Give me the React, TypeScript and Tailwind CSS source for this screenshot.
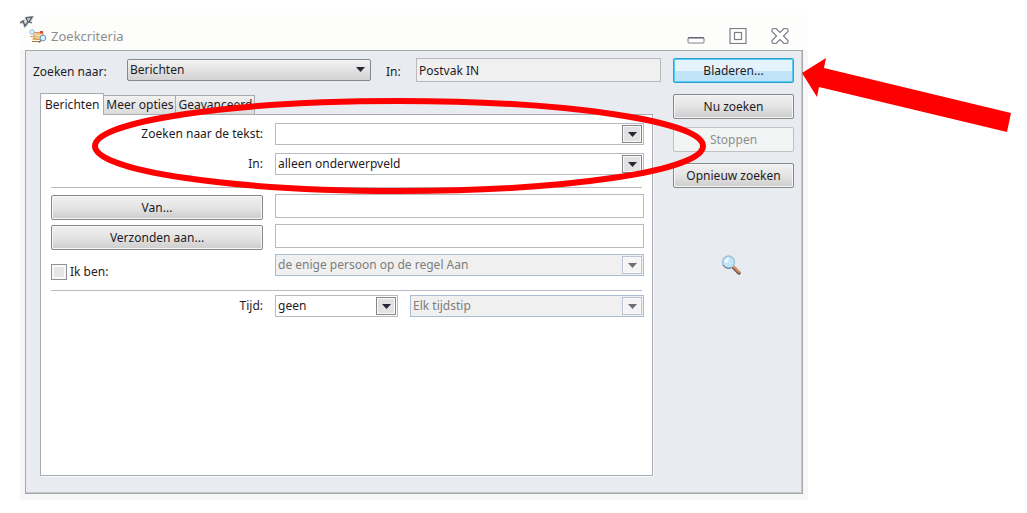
import React, { useState } from "react";
import type { ReactNode } from "react";

interface ButtonProps {
  children: ReactNode;
  disabled?: boolean;
  primary?: boolean;
}

interface DropdownProps {
  id: string;
  label?: string;
  options: string[];
  disabled?: boolean;
}

const DialogButton = ({ children, disabled, primary }: ButtonProps) => {
  const look = disabled
    ? "border-[#bfc1c4] bg-[#f3f4f4] text-[#8f8f8f]"
    : primary
      ? "border-[#2f9fd0] bg-linear-to-b from-[#e4f3fc] from-50% to-[#bfe4f8] to-50% shadow-[inset_0_0_0_1px_#55cdf5]"
      : "border-[#85878b] bg-linear-to-b from-[#f1f1f1] via-[#e4e4e4] via-50% to-[#cdcdcd] shadow-[inset_0_0_0_1px_#f6f6f6]";
  return (
    <button
      disabled={disabled}
      className={`block h-[25px] w-full rounded-xs border text-center ${look}`}
    >
      {children}
    </button>
  );
};

const Triangle = () => (
  <svg width="9" height="5" viewBox="0 0 9 5" fill="currentColor">
    <path d="M0 0h9L4.500 5z" />
  </svg>
);

const arrowBox =
  "flex w-5 items-center justify-center border shadow-[inset_0_0_0_1px_#fafafa]";

const Dropdown = ({ id, label, options, disabled }: DropdownProps) => (
  <div
    className={`relative h-[22px] w-full border ${
      disabled ? "border-[#a9bdd3] bg-[#f0f0f0]" : "border-[#b9babd] bg-white"
    }`}
  >
    <select
      id={id}
      aria-label={label}
      disabled={disabled}
      className={`block h-5 w-full appearance-none pr-6 pl-0.5 leading-5 opacity-100 ${
        disabled ? "text-[#7d7d7d]" : "text-[#1f1b24]"
      }`}
    >
      {options.map((option) => (
        <option key={option}>{option}</option>
      ))}
    </select>
    <span
      className={`pointer-events-none absolute inset-y-px right-px ${arrowBox} ${
        disabled
          ? "border-[#b9c4d0] bg-[#f4f4f4] text-[#6e6e78]"
          : "border-[#85878b] bg-[#e2e2e2] text-[#2a2433]"
      }`}
    >
      <Triangle />
    </span>
  </div>
);

const TitleIcon = () => (
  <svg width="18" height="15" viewBox="0 0 18 15">
    <path d="M5 3.500h9v7H5z" fill="#ecc48a" stroke="#d09a5c" />
    <path d="M3 12.500h8" stroke="#a8743c" />
    <path d="M5 4.500l4 2.500 4-2" fill="none" stroke="#fae9c8" />
    <path d="M1 7.500h4M3 10h3" stroke="#d9a565" />
    <rect x="11" y="2" width="3" height="2.500" fill="#e2463a" />
    <circle cx="3" cy="3" r="2.200" fill="#e6f4fc" stroke="#8fb6d8" />
    <circle cx="14" cy="9" r="2.800" fill="#dff2fc" stroke="#5b9ad0" />
    <path d="M12 11.500l-2 2" stroke="#8a5a34" strokeWidth="1.500" />
  </svg>
);

const Magnifier = () => (
  <svg width="20" height="20" viewBox="0 0 20 20">
    <path d="M12 12l6 6" stroke="#6d5a54" strokeWidth="3.500" strokeLinecap="round" />
    <path d="M12.500 11.500l5.500 5.500" stroke="#e0905f" strokeWidth="2" strokeLinecap="round" />
    <circle cx="7.500" cy="7" r="6" fill="#bfe6f9" stroke="#a3c3d8" strokeWidth="1.500" />
    <path d="M3.500 7a4 4 0 0 1 5-4L6 8z" fill="#f1fbff" />
    <path d="M2 10a6.500 6.500 0 0 0 8 3" fill="none" stroke="#5f7283" />
  </svg>
);

const WindowControls = () => (
  <div className="flex items-center gap-6 text-[#7c7e88]">
    <button aria-label="Minimaliseren" className="pt-2">
      <svg width="18" height="7" viewBox="0 0 18 7">
        <rect x="1" y="0.500" width="16" height="5.500" rx="1" fill="#fff" stroke="currentColor" />
        <path d="M1 1h16" stroke="#4f5160" />
      </svg>
    </button>
    <button aria-label="Maximaliseren">
      <svg width="18" height="16" viewBox="0 0 18 16" fill="#fff" stroke="currentColor">
        <rect x="1" y="0.500" width="16" height="15" strokeWidth="1.200" />
        <rect x="5.500" y="4.500" width="7" height="7" strokeWidth="1.200" />
      </svg>
    </button>
    <button aria-label="Sluiten">
      <svg width="18" height="16" viewBox="0 0 18 16">
        <path
          d="M1 2.500Q1 .5 3 .5h2L9 4.500 13 .5h2q2 0 2 2v1L12.500 8 17 12.500v1q0 2-2 2h-2L9 11.500l-4 4H3q-2 0-2-2v-1L5.500 8 1 3.500z"
          fill="#fff"
          stroke="currentColor"
          strokeWidth="1.200"
        />
      </svg>
    </button>
  </div>
);

const tabs = ["Berichten", "Meer opties", "Geavanceerd"];

const formRow = "grid grid-cols-[212px_1fr] gap-x-3";
const textBox = "block h-6 w-full border border-[#b9babd] bg-white px-1";

const SearchForm = () => {
  const [text, setText] = useState("");
  return (
    <div className="min-h-[362px] border border-[#a9abb0] bg-white pt-2 pr-2 pl-2.5 shadow-[1px_1px_0_#fafafa]">
      <div className={`${formRow} items-center`}>
        <label htmlFor="text" className="text-right">
          Zoeken naar de tekst:
        </label>
        <div className="flex h-[22px] border border-[#b9babd] p-px">
          <input
            id="text"
            value={text}
            onChange={(e) => setText(e.target.value)}
            className="min-w-0 flex-1 px-1"
          />
          <button
            aria-label="Recente teksten"
            className={`${arrowBox} border-[#85878b] bg-[#e2e2e2] text-[#2a2433]`}
          >
            <Triangle />
          </button>
        </div>
      </div>
      <div className={`${formRow} mt-2 items-center`}>
        <label htmlFor="field" className="text-right">
          In:
        </label>
        <Dropdown id="field" options={["alleen onderwerpveld"]} />
      </div>

      <hr className="mt-3 mr-0.5 mb-1.5 border-[#b9babd]" />

      <div className={formRow}>
        <div className="pt-px">
          <DialogButton>Van...</DialogButton>
        </div>
        <input aria-label="Van" className={textBox} />
      </div>
      <div className={`${formRow} mt-1`}>
        <div className="pt-px">
          <DialogButton>Verzonden aan...</DialogButton>
        </div>
        <input aria-label="Verzonden aan" className={textBox} />
      </div>
      <div className={`${formRow} mt-1`}>
        <label className="flex items-center gap-[3px] pt-2.5">
          <input
            type="checkbox"
            className="size-4 appearance-none border border-[#8f9196] bg-[#e6e6e6] shadow-[inset_0_0_0_2px_#f8f8f8] checked:bg-[#4d6f9c]"
          />
          Ik ben:
        </label>
        <Dropdown
          id="role"
          label="Ik ben"
          options={["de enige persoon op de regel Aan"]}
          disabled
        />
      </div>

      <hr className="mt-2.5 mr-0.5 mb-1 border-[#b9babd]" />

      <div className={`${formRow} items-center`}>
        <label htmlFor="time" className="text-right">
          Tijd:
        </label>
        <div className="flex gap-3">
          <div className="w-[123px] shrink-0">
            <Dropdown id="time" options={["geen"]} />
          </div>
          <Dropdown id="moment" label="Tijdstip" options={["Elk tijdstip"]} disabled />
        </div>
      </div>
    </div>
  );
};

const Annotations = () => (
  <svg
    className="pointer-events-none absolute top-0 left-0"
    width="1027"
    height="200"
    viewBox="0 0 1027 200"
  >
    <ellipse cx="399" cy="146" rx="304" ry="45" fill="none" stroke="#f00" strokeWidth="6" />
    <path d="M802 73L826 58 824 68 1011 113 1007 132 819 87 817 97z" fill="#f00" />
  </svg>
);

export default function App() {
  const [active, setActive] = useState(0);

  return (
    <div className="relative bg-white pt-[15px] pr-[219px] pb-3 pl-5 font-['Noto_Sans','Liberation_Sans',sans-serif] text-xs text-[#1f1b24]">
      <main className="bg-[#f7f7f7] px-[5px] pb-1.5">
        <header className="-mx-[5px] flex h-[35px] items-end justify-between bg-[#fdfdfb] pr-[19px] pb-1.5 pl-[9px]">
          <div className="flex items-center gap-1">
            <TitleIcon />
            <h1 className="text-[13px] leading-4 text-[#8d8d8d]">Zoekcriteria</h1>
          </div>
          <WindowControls />
        </header>

        <div className="flex gap-3 border border-[#a4a7ac] bg-[#e8ebf0] pt-[7px] pr-2 pb-[17px] pl-[7px] shadow-[inset_-1px_-1px_0_#c5c9ce]">
          <div className="min-w-0 flex-1">
            <div className="flex items-center">
              <label htmlFor="kind" className="w-[94px] shrink-0 pt-1">
                Zoeken naar:
              </label>
              <div className="relative w-[244px] shrink-0">
                <select
                  id="kind"
                  className="block h-[22px] w-full appearance-none rounded-xs border border-[#85878b] bg-linear-to-b from-[#f3f3f3] to-[#d3d3d3] px-0.5"
                >
                  <option>Berichten</option>
                </select>
                <span className="pointer-events-none absolute top-2 right-1.5 text-[#2a2433]">
                  <Triangle />
                </span>
              </div>
              <label htmlFor="folder" className="w-[45px] shrink-0 pt-1 pl-[15px]">
                In:
              </label>
              <input
                id="folder"
                readOnly
                value="Postvak IN"
                className="h-6 min-w-0 flex-1 border border-[#b9babd] bg-[#f0f0f0] px-0.5"
              />
            </div>

            <div className="mt-[11px] mr-2 ml-[7px]">
              <div role="tablist" className="flex items-end">
                {tabs.map((tab, i) => (
                  <button
                    key={tab}
                    role="tab"
                    aria-selected={active === i}
                    onClick={() => setActive(i)}
                    className={
                      active === i
                        ? "relative -mb-px h-[22px] border border-b-0 border-[#a9abb0] bg-white px-1"
                        : "h-[19px] border border-b-0 border-l-0 border-[#a9abb0] bg-linear-to-b from-[#f1f1f1] to-[#dcdcdc] px-0.5"
                    }
                  >
                    {tab}
                  </button>
                ))}
              </div>
              <SearchForm />
            </div>
          </div>

          <aside className="w-[121px] shrink-0">
            <DialogButton primary>Bladeren...</DialogButton>
            <div className="mt-[11px] flex flex-col gap-2">
              <DialogButton>Nu zoeken</DialogButton>
              <DialogButton disabled>Stoppen</DialogButton>
            </div>
            <div className="mt-[11px]">
              <DialogButton>Opnieuw zoeken</DialogButton>
            </div>
            <div className="mt-[67px] ml-12">
              <Magnifier />
            </div>
          </aside>
        </div>
      </main>

      {/* stray cursor over the corner of the window */}
      <svg className="absolute top-4 left-5" width="14" height="12" viewBox="0 0 14 12" fill="none">
        <path
          d="M1 7l3-2 1 5 4-5-2-3 5-1-2 4"
          stroke="#c9ccd2"
          strokeWidth="3"
        />
        <path
          d="M0 7l3-2 2 5 3-4-2-4 6-1-3 5 3 1"
          stroke="#4d525e"
          strokeWidth="1.200"
        />
      </svg>
      <Annotations />
    </div>
  );
}
